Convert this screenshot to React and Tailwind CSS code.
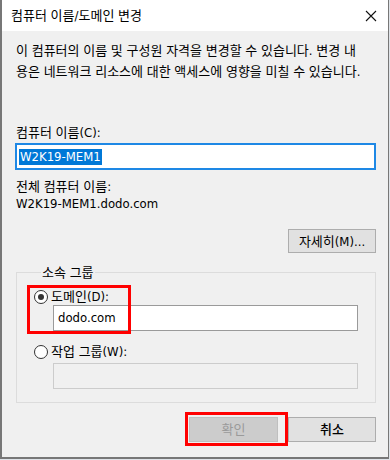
import React from 'react';

const font = { fontFamily: '"DejaVu Sans Condensed", "Noto Sans CJK KR", sans-serif' };

function Radio({ checked }) {
  return (
    <span className="w-[14px] h-[14px] rounded-full border border-[#333333] bg-white flex items-center justify-center shrink-0">
      {checked && <span className="w-[6px] h-[6px] rounded-full bg-[#333333]" />}
    </span>
  );
}

export default function App() {
  return (
    <div className="w-[390px] h-[460px] bg-[#dfe3e8] text-[13px] text-black" style={font}>
      <div className="w-[389px] h-[459px] bg-[#f0f0f0] border-l-2 border-r border-b-2 border-[#777777] flex flex-col">
        {/* title bar */}
        <div className="h-[31px] bg-white flex items-center justify-between pl-[9px] pr-[10px] shrink-0">
          <span className="text-[13px] leading-none">컴퓨터 이름/도메인 변경</span>
          <svg width="12" height="12" viewBox="0 0 12 12" className="mr-[1px]">
            <path d="M1 1 L11 11 M11 1 L1 11" stroke="#111" strokeWidth="1.1" />
          </svg>
        </div>

        <div className="px-[13px] flex flex-col">
          <p className="pt-[9px] pl-[1px] leading-[21px] whitespace-nowrap">
            이 컴퓨터의 이름 및 구성원 자격을 변경할 수 있습니다. 변경 내<br />
            용은 네트워크 리소스에 대한 액세스에 영향을 미칠 수 있습니다.
          </p>

          <div className="mt-[40px] leading-[21px] pl-[1px]">컴퓨터 이름(C):</div>
          <div className="h-[27px] bg-white border-2 border-[#1e88e5] flex items-center pl-[2px] mr-[-1px]">
            <span className="bg-[#0078d7] text-white leading-[16px] px-[1px]">W2K19-MEM1</span>
          </div>

          <div className="mt-[8px] leading-[17px] pl-[1px]">전체 컴퓨터 이름:</div>
          <div className="leading-[17px] pl-[1px]">W2K19-MEM1.dodo.com</div>

          <div className="flex justify-end mt-[17px]">
            <button className="w-[88px] h-[24px] bg-[#e1e1e1] border border-[#adadad] text-[13px] leading-none mr-[-1px] whitespace-nowrap">
              자세히(M)...
            </button>
          </div>

          <fieldset className="mt-[11px] border border-[#dcdcdc] ml-[1px] mr-[-1px] pl-[17px] pr-[17px] pb-[13px]">
            <legend className="ml-[7px] px-[1px] leading-[17px]">소속 그룹</legend>
            <div className="relative">
              <div className="flex items-center gap-[3px] h-[17px] mt-[7px]">
                <Radio checked />
                <span className="leading-[17px]">도메인(D):</span>
              </div>
              <div className="h-[26px] bg-white border border-[#9a9a9a] ml-[19px] flex items-center pl-[4px]">
                dodo.com
              </div>
              <div className="absolute left-[-7px] top-[-3px] w-[104px] h-[49px] border-[3px] border-[#ff0000]" />
            </div>
            <div className="flex items-center gap-[3px] h-[17px] mt-[12px]">
              <Radio />
              <span className="leading-[17px]">작업 그룹(W):</span>
            </div>
            <div className="h-[26px] bg-[#f0f0f0] border border-[#cccccc] ml-[19px] mt-[3px]" />
          </fieldset>

          <div className="flex justify-end gap-[10px] mt-[14px] mr-[-1px]">
            <div className="relative">
              <button className="w-[89px] h-[25px] bg-[#cccccc] border border-[#bfbfbf] text-[#9a9a9a] text-[13px] leading-none">
                확인
              </button>
              <div className="absolute left-[-4px] top-[-5px] w-[103px] h-[34px] border-[3px] border-[#ff0000]" />
            </div>
            <button className="w-[88px] h-[25px] bg-[#e1e1e1] border border-[#adadad] text-[13px] font-medium leading-none">
              취소
            </button>
          </div>
        </div>
      </div>
    </div>
  );
}
